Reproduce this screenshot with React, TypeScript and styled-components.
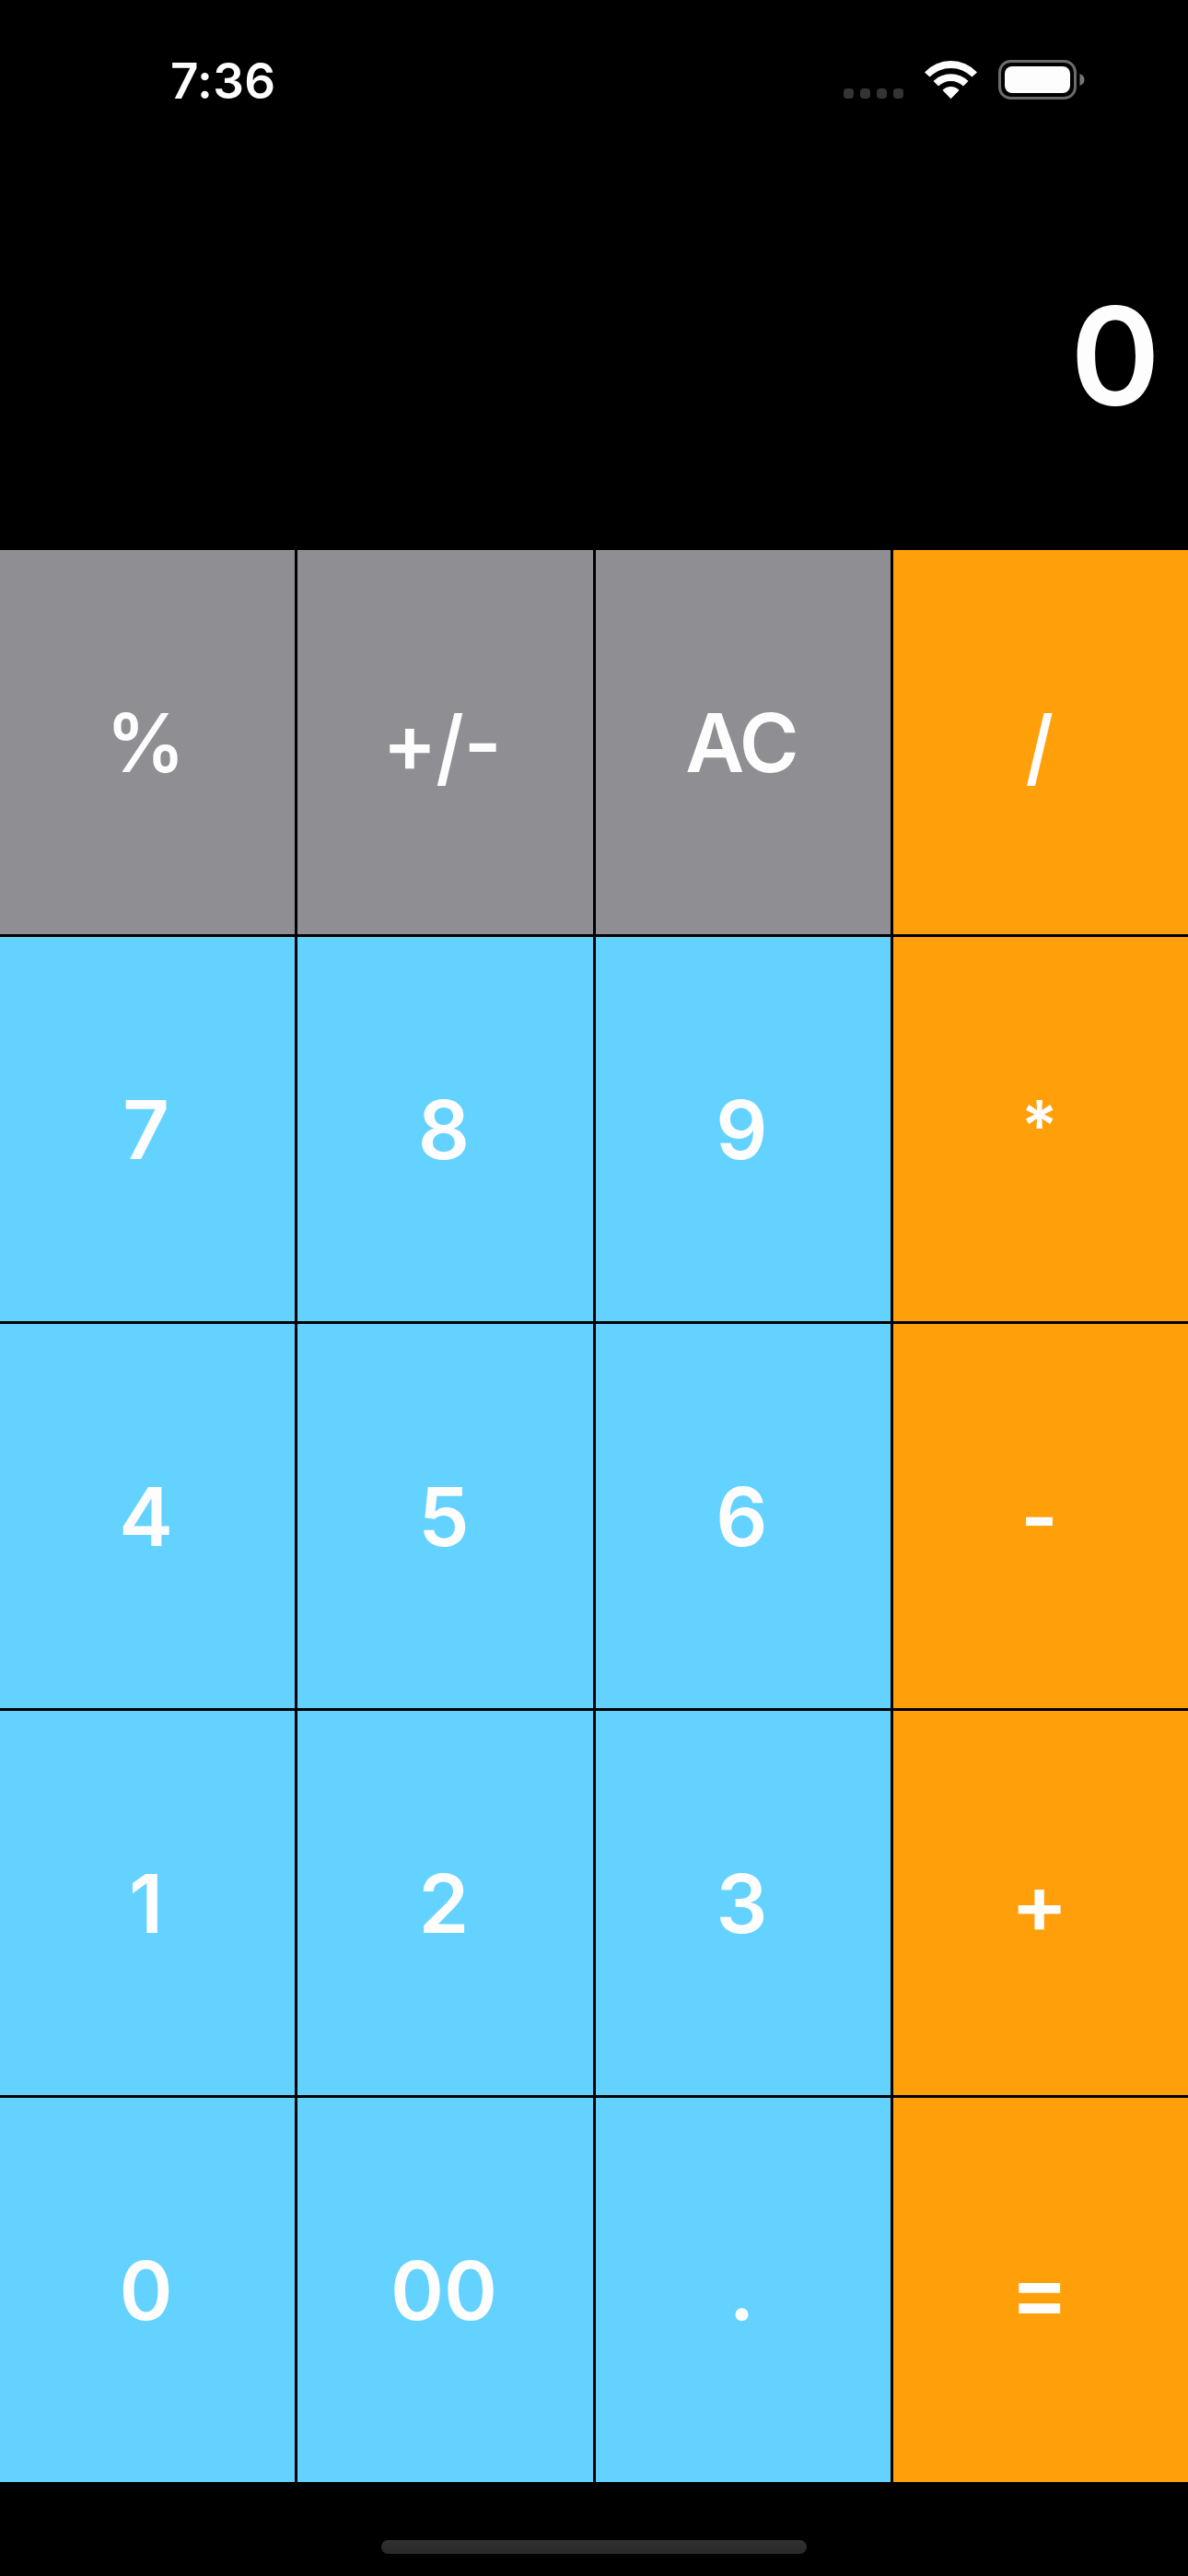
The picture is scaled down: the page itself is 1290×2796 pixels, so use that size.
import React from "react";
import styled, { createGlobalStyle } from "styled-components";

const GlobalStyle = createGlobalStyle`
  * { box-sizing: border-box; }
  html, body { margin: 0; background: #000; }
`;

const Screen = styled.main`
  width: 1290px;
  height: 2796px;
  display: flex;
  flex-direction: column;
  background: #000;
  color: #fdfdfe;
  font-family: Inter, "Liberation Sans", sans-serif;
  overflow: hidden;
`;

const StatusBar = styled.header`
  height: 177px;
  display: flex;
  justify-content: space-between;
  padding: 57px 112px 0 185px;
`;

const Time = styled.time`
  height: 62px;
  font-size: 53px;
  font-weight: 570;
  line-height: 62px;
  letter-spacing: 0.3px;
`;

const StatusIcons = styled.div`
  height: 62px;
  display: flex;
  align-items: flex-start;
  padding-top: 3px;
`;

const Display = styled.output`
  height: 420px;
  display: flex;
  justify-content: flex-end;
  padding: 120px 30px 0 0;
  font-size: 148px;
  font-weight: 570;
  line-height: 180px;
`;

const Keypad = styled.section`
  display: grid;
  grid-template-columns: 320px 321px 320px 320px;
  grid-template-rows: repeat(5, 417px);
  gap: 3px;
`;

type Tone = "gray" | "blue" | "orange";

const tones: Record<Tone, string> = {
  gray: "#8e8e93",
  blue: "#64d2ff",
  orange: "#ff9f0a",
};

const Key = styled.button<{ $tone: Tone }>`
  display: flex;
  align-items: center;
  justify-content: center;
  padding: 0 3px 0 0;
  border: 0;
  background: ${(p) => tones[p.$tone]};
  color: inherit;
  font: inherit;
  font-size: 88px;
  font-weight: 570;
  line-height: 108px;
`;

const Glyph = styled.span<{ $x?: number; $y?: number; $drop?: number }>`
  display: inline-block;
  transform: translateY(${(p) => p.$drop ?? 0}px)
    scale(${(p) => p.$x ?? 1}, ${(p) => p.$y ?? 1});
`;

const PlusMinus = styled.span`
  letter-spacing: -2px;
  padding-right: 6px;
`;

const Clear = styled.span`
  letter-spacing: -2px;
  padding-right: 1px;
`;

const HomeArea = styled.footer`
  flex: 1;
  display: flex;
  justify-content: center;
  padding-top: 63px;
`;

const HomeIndicator = styled.div`
  width: 462px;
  height: 15px;
  border-radius: 8px;
  background: linear-gradient(#303031, #29292a);
`;

const StatusGlyphs = () => (
  <svg width="268" height="56" viewBox="910 60 268 56" fill="#fdfdfe">
    {[921.5, 939.5, 957.5, 975.5].map((x) => (
      <rect key={x} x={x - 5.5} y="96" width="11" height="11" rx="4" fill="#343435" />
    ))}
    <path d="M1004 78.5A39 39 0 0 1 1061 78.5L1055.5 83.5A32.6 32.6 0 0 0 1009.5 83.5Z" />
    <path d="M1013.5 88A27 27 0 0 1 1051.5 88L1046 93.5A19.5 19.5 0 0 0 1019 93.5Z" />
    <path d="M1023.5 98A12.2 12.2 0 0 1 1041.5 98L1032.5 107.2Z" />
    <rect x="1085.5" y="66.5" width="82" height="40" rx="12" fill="none" stroke="#6b6b6d" strokeWidth="3" />
    <rect x="1091" y="72" width="71" height="29" rx="8" />
    <path d="M1172.5 80Q1177.5 82 1177.5 86.5T1172.5 93Z" fill="#77777a" />
  </svg>
);

const Slash = () => (
  <Glyph $x={0.9} $y={1.03} $drop={4}>
    /
  </Glyph>
);

const keys: { id: string; tone: Tone; face?: React.ReactNode }[] = [
  { id: "%", tone: "gray", face: <Glyph $x={0.97}>%</Glyph> },
  {
    id: "+/-",
    tone: "gray",
    face: (
      <PlusMinus>
        +<Slash />-
      </PlusMinus>
    ),
  },
  { id: "AC", tone: "gray", face: <Clear>AC</Clear> },
  { id: "/", tone: "orange", face: <Slash /> },
  { id: "7", tone: "blue" },
  { id: "8", tone: "blue" },
  { id: "9", tone: "blue" },
  { id: "*", tone: "orange", face: <Glyph $x={0.84} $y={0.86} $drop={-5}>*</Glyph> },
  { id: "4", tone: "blue" },
  { id: "5", tone: "blue" },
  { id: "6", tone: "blue" },
  { id: "-", tone: "orange" },
  { id: "1", tone: "blue" },
  { id: "2", tone: "blue" },
  { id: "3", tone: "blue" },
  { id: "+", tone: "orange", face: <Glyph $x={1.06}>+</Glyph> },
  { id: "0", tone: "blue" },
  { id: "00", tone: "blue" },
  { id: ".", tone: "blue" },
  { id: "=", tone: "orange", face: <Glyph $x={1.08} $y={1.12} $drop={1}>=</Glyph> },
];

export default function App() {
  return (
    <Screen>
      <GlobalStyle />
      <StatusBar>
        <Time>7:36</Time>
        <StatusIcons>
          <StatusGlyphs />
        </StatusIcons>
      </StatusBar>
      <Display>0</Display>
      <Keypad>
        {keys.map((key) => (
          <Key key={key.id} $tone={key.tone}>
            {key.face ?? key.id}
          </Key>
        ))}
      </Keypad>
      <HomeArea>
        <HomeIndicator />
      </HomeArea>
    </Screen>
  );
}
